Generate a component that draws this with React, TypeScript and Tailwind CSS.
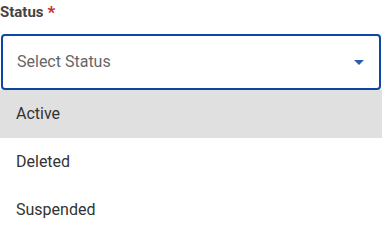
import React from 'react';

const options = ['Active', 'Deleted', 'Suspended'];

export default function App() {
  return (
    <div className="w-[382px] h-[234px] bg-white overflow-hidden font-['Roboto',sans-serif]">
      <div className="h-[34px] pt-[1px] flex items-start">
        <span className="text-[15px] leading-[22px] font-bold text-[#444]">Status</span>
        <span className="text-[17px] leading-[22px] font-bold text-[#c62828] ml-[4px]">*</span>
      </div>
      <div className="mx-[1px] h-[56px] border-2 border-[#0d47a1] rounded-[4px] flex items-center justify-between pl-[14px] pr-[14px]">
        <span className="text-[16px] text-[#666]">Select Status</span>
        <svg width="10" height="5" viewBox="0 0 10 5" className="mr-[1px]">
          <path d="M0 0h10L5 5z" fill="#2a5db0" />
        </svg>
      </div>
      <ul className="rounded-b-[4px] shadow-[0_2px_4px_rgba(0,0,0,0.15)]">
        {options.map((o, i) => (
          <li
            key={o}
            className={`h-[48px] flex items-center px-[16px] text-[16px] text-[#333] ${i === 0 ? 'bg-[#e0e0e0]' : 'bg-white'}`}
          >
            {o}
          </li>
        ))}
      </ul>
    </div>
  );
}
